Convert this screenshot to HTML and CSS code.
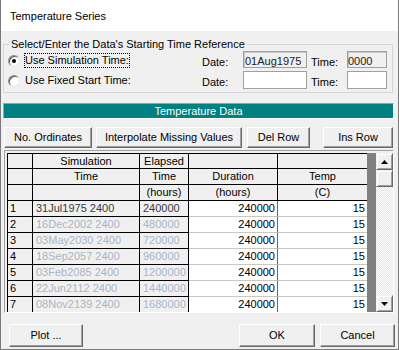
FILE: index.html
```html
<!DOCTYPE html>
<html>
<head>
<meta charset="utf-8">
<title>Temperature Series</title>
<link rel="stylesheet" href="styles.css">
</head>
<body>
<div class="window">
  <div class="titlebar">Temperature Series</div>

  <fieldset class="ref">
    <legend>Select/Enter the Data's Starting Time Reference</legend>
    <div class="ref-grid">
      <div class="opt"><span class="radio on"></span><span class="opt-text focus">Use Simulation Time:</span></div>
      <span class="lbl">Date:</span>
      <span class="box dis pad1">01Aug1975</span>
      <span class="lbl lbl-time">Time:</span>
      <span class="box dis">0000</span>

      <div class="opt"><span class="radio"></span><span class="opt-text">Use Fixed Start Time:</span></div>
      <span class="lbl">Date:</span>
      <span class="box"></span>
      <span class="lbl lbl-time">Time:</span>
      <span class="box"></span>
    </div>
  </fieldset>

  <div class="banner">Temperature Data</div>

  <div class="tools">
    <button class="btn w-ord">No. Ordinates</button>
    <button class="btn w-int">Interpolate Missing Values</button>
    <button class="btn w-del">Del Row</button>
    <button class="btn w-ins">Ins Row</button>
  </div>

  <div class="frame">
    <div class="grid">
      <table class="data">
        <thead>
          <tr class="h1">
            <th class="c-n"></th><th class="c-s">Simulation</th><th class="c-e">Elapsed</th><th class="c-d"></th><th class="c-t"></th>
          </tr>
          <tr class="h2">
            <th class="c-n"></th><th class="c-s">Time</th><th class="c-e">Time</th><th class="c-d">Duration</th><th class="c-t">Temp</th>
          </tr>
          <tr class="h2">
            <th class="c-n"></th><th class="c-s"></th><th class="c-e">(hours)</th><th class="c-d">(hours)</th><th class="c-t">(C)</th>
          </tr>
        </thead>
        <tbody>
          <tr class="first"><td class="c-n">1</td><td class="c-s">31Jul1975 2400</td><td class="c-e">240000</td><td class="c-d">240000</td><td class="c-t">15</td></tr>
          <tr><td class="c-n">2</td><td class="c-s">16Dec2002 2400</td><td class="c-e">480000</td><td class="c-d">240000</td><td class="c-t">15</td></tr>
          <tr><td class="c-n">3</td><td class="c-s">03May2030 2400</td><td class="c-e">720000</td><td class="c-d">240000</td><td class="c-t">15</td></tr>
          <tr><td class="c-n">4</td><td class="c-s">18Sep2057 2400</td><td class="c-e">960000</td><td class="c-d">240000</td><td class="c-t">15</td></tr>
          <tr><td class="c-n">5</td><td class="c-s">03Feb2085 2400</td><td class="c-e">1200000</td><td class="c-d">240000</td><td class="c-t">15</td></tr>
          <tr><td class="c-n">6</td><td class="c-s">22Jun2112 2400</td><td class="c-e">1440000</td><td class="c-d">240000</td><td class="c-t">15</td></tr>
          <tr><td class="c-n">7</td><td class="c-s">08Nov2139 2400</td><td class="c-e">1680000</td><td class="c-d">240000</td><td class="c-t">15</td></tr>
        </tbody>
      </table>
      <div class="fill"></div>
      <div class="vsb">
        <div class="sb-btn"><svg width="7" height="4" viewBox="0 0 7 4"><polygon points="3.5,0 7,4 0,4" fill="#000"/></svg></div>
        <div class="sb-btn"></div>
        <div class="sb-track"></div>
        <div class="sb-btn"><svg width="7" height="4" viewBox="0 0 7 4"><polygon points="0,0 7,0 3.5,4" fill="#000"/></svg></div>
      </div>
    </div>
  </div>

  <div class="footer">
    <button class="btn fbtn w-plot">Plot ...</button>
    <button class="btn fbtn w-ok">OK</button>
    <button class="btn fbtn w-cancel">Cancel</button>
  </div>
</div>
</body>
</html>
```

FILE: styles.css
```css
* { box-sizing: border-box; }

html, body {
  margin: 0;
  padding: 0;
}

body {
  width: 399px;
  height: 350px;
  overflow: hidden;
  background: #ffffff;
  font-family: "Liberation Sans", Arial, sans-serif;
  font-size: 11px;
  color: #000;
}

.window {
  width: 399px;
  height: 350px;
  border: 1px solid #7a7a7a;
  border-top: 0;
  background: #f0f0f0;
  display: flex;
  flex-direction: column;
}

.titlebar {
  height: 31px;
  flex: none;
  background: #fff;
  padding: 10px 0 0 9px;
  line-height: 13px;
}

/* group box */
.ref {
  margin: 7px 5px 0 2px;
  padding: 0 4px 3px 4px;
  border: 1px solid #d5d5d5;
  min-width: 0;
  flex: none;
}

.ref legend {
  padding: 0 2px;
  margin-left: 1px;
  line-height: 13px;
}

.ref-grid {
  display: grid;
  grid-template-columns: 194px 41px 64px 40px 40px;
  grid-template-rows: 17px 18px;
  row-gap: 3px;
}

.opt {
  display: flex;
  align-items: center;
  align-self: start;
  margin-top: 2px;
  height: 15px;
}

.radio {
  position: relative;
  width: 12px;
  height: 12px;
  flex: none;
  border-radius: 50%;
  background: #fff;
  border: 1px solid;
  border-color: #8a8a8a #e6e6e6 #e6e6e6 #8a8a8a;
  box-shadow: inset 1px 1px 0 #5a5a5a;
}

.radio.on::after {
  content: "";
  position: absolute;
  left: 3px;
  top: 3px;
  width: 4px;
  height: 4px;
  border-radius: 50%;
  background: #000;
}

.opt-text {
  margin-left: 4px;
  border: 1px dotted transparent;
  line-height: 13px;
  white-space: nowrap;
}

.opt-text.focus {
  border-color: #000;
}

.lbl {
  padding-top: 5px;
  line-height: 13px;
  white-space: nowrap;
}

.lbl-time {
  padding-left: 4px;
}

.box {
  border: 1px solid #a0a0a0;
  background: #fff;
  padding: 3px 0 0 0;
  line-height: 13px;
  height: 100%;
  white-space: nowrap;
}

.box.pad1 {
  padding-left: 1px;
}

.box.dis {
  background: #f0f0f0;
  color: #222;
  box-shadow: inset 1px 1px 0 #c8c8c8;
}

/* teal banner */
.banner {
  flex: none;
  margin: 10px 4px 0 2px;
  height: 16px;
  background: #008080;
  color: #fff;
  text-align: center;
  border: 1px solid;
  border-color: #a0a0a0 #fff #fff #a0a0a0;
  padding-top: 1px;
  line-height: 13px;
}

/* buttons */
.btn {
  appearance: none;
  -webkit-appearance: none;
  margin: 0;
  padding: 0;
  font-family: inherit;
  font-size: 11px;
  color: #000;
  background: #f0f0f0;
  border: 1px solid;
  border-color: #fff #696969 #696969 #fff;
  box-shadow: inset -1px -1px 0 #a0a0a0;
  text-align: center;
  white-space: nowrap;
  line-height: 13px;
}

.tools {
  flex: none;
  display: flex;
  margin: 8px 0 0 3px;
  height: 21px;
}

.tools .btn { height: 21px; }

.w-ord { width: 88px; }
.w-int { width: 146px; margin-left: 4px; }
.w-del { width: 63px; margin-left: 5px; }
.w-ins { width: 70px; margin-left: 13px; }

/* grid */
.frame {
  flex: none;
  margin: 2px 4px 0 3px;
  border: 1px solid;
  border-color: #a0a0a0 #fff #fff #a0a0a0;
  padding: 2px 0 0 2px;
}

.grid {
  display: flex;
  height: 159px;
  overflow: hidden;
}

table.data {
  border-collapse: separate;
  border-spacing: 0;
  table-layout: fixed;
  width: 360px;
  flex: none;
  align-self: flex-start;
  border-left: 1px solid #000;
  border-top: 1px solid #000;
}

.data th,
.data td {
  padding: 0;
  border-right: 1px solid #000;
  border-bottom: 1px solid #000;
  white-space: nowrap;
  overflow: hidden;
  font-weight: normal;
  background: #f0f0f0;
}

.data th {
  text-align: center;
}

.data tr.h1 th { line-height: 14px; }
.data tr.h2 th { line-height: 15px; }
.data td { line-height: 15px; }

.c-n { width: 25px; }
.c-s { width: 107px; }
.c-e { width: 49px; }
.c-d { width: 89px; }
.c-t { width: 89px; }

.data th.c-t,
.data td.c-t {
  border-right: 0;
}

.data td.c-n {
  padding-left: 2px;
}

.data td.c-s,
.data td.c-e {
  padding-left: 3px;
  color: #a9b5c5;
}

.data tr.first td.c-s,
.data tr.first td.c-e {
  color: #3a3a3a;
}

.data td.c-d,
.data td.c-t {
  background: #fff;
  text-align: right;
  padding-right: 2px;
  border-bottom-color: #c8c8c8;
}

.data td.c-d {
  border-right-color: #6a6a6a;
}

.fill {
  width: 9px;
  flex: none;
  background: #808080;
}

.vsb {
  width: 17px;
  flex: none;
  display: flex;
  flex-direction: column;
  background: repeating-conic-gradient(#ffffff 0 25%, #e4e4e4 0 50%) 0 0 / 2px 2px;
}

.sb-btn {
  height: 17px;
  flex: none;
  display: flex;
  align-items: center;
  justify-content: center;
  background: #f0f0f0;
  border: 1px solid;
  border-color: #f0f0f0 #696969 #696969 #f0f0f0;
  box-shadow: inset 1px 1px 0 #fff, inset -1px -1px 0 #a0a0a0;
}

.sb-btn svg { display: block; }

.sb-track { flex: 1; }

/* footer */
.footer {
  flex: none;
  display: flex;
  margin: 11px 3px 0 8px;
}

.fbtn { height: 23px; }

.w-plot { width: 74px; }
.w-ok { width: 76px; margin-left: auto; }
.w-cancel { width: 75px; margin-left: 5px; }
```
